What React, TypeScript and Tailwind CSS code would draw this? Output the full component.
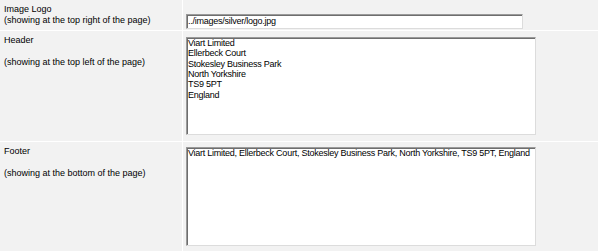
import React from "react";

const header = `Viart Limited
Ellerbeck Court
Stokesley Business Park
North Yorkshire
TS9 5PT
England`;

const footer =
  "Viart Limited, Ellerbeck Court, Stokesley Business Park, North Yorkshire, TS9 5PT, England";

const fieldBorder =
  "border border-t-[#9a9a9a] border-l-[#9a9a9a] border-r-[#dcdcdc] border-b-[#dcdcdc] shadow-[inset_1px_1px_0_#6e6e6e] bg-white text-black outline-none text-[9px] tracking-[-0.25px]";

function Label({ title, note, gap }: { title: string; note: string; gap?: boolean }) {
  return (
    <div className="w-[182px] shrink-0 bg-[#f2f2f2] pl-[4px] pt-[4px] text-[9px] leading-[11px] text-black">
      <div>{title}</div>
      {gap && <div>&nbsp;</div>}
      <div>{note}</div>
    </div>
  );
}

export default function App() {
  return (
    <div
      className="w-[598px] h-[251px] overflow-hidden bg-white flex flex-col gap-px"
      style={{ fontFamily: '"Liberation Sans", Arial, sans-serif' }}
    >
      {/* Image logo */}
      <div className="flex gap-px h-[30px] shrink-0">
        <Label title="Image Logo" note="(showing at the top right of the page)" />
        <div className="flex-1 bg-[#f2f2f2] pl-[3px] pt-[7px]">
          <input
            readOnly
            defaultValue="../images/silver/logo.jpg"
            className={`${fieldBorder} w-[337px] h-[15px] px-[1px] leading-[11px]`}
          />
        </div>
      </div>

      {/* Header */}
      <div className="flex gap-px h-[110px] shrink-0">
        <Label title="Header" note="(showing at the top left of the page)" gap />
        <div className="flex-1 bg-[#f2f2f2] pl-[3px] pt-[6px]">
          <textarea
            readOnly
            defaultValue={header}
            className={`${fieldBorder} block w-[350px] h-[98px] resize-none overflow-hidden px-[1px] py-0 leading-[10.33px]`}
          />
        </div>
      </div>

      {/* Footer */}
      <div className="flex gap-px flex-1">
        <Label title="Footer" note="(showing at the bottom of the page)" gap />
        <div className="flex-1 bg-[#f2f2f2] pl-[3px] pt-[5px]">
          <textarea
            readOnly
            wrap="off"
            defaultValue={footer}
            className={`${fieldBorder} block w-[350px] h-[99px] resize-none overflow-hidden px-[1px] py-0 leading-[10.33px]`}
          />
        </div>
      </div>
    </div>
  );
}
